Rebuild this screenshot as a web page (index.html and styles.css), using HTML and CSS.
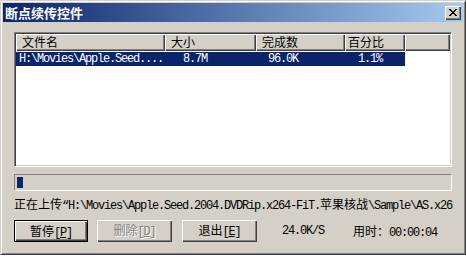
FILE: index.html
```html
<!DOCTYPE html>
<html lang="zh-CN">

<head>
    <meta charset="UTF-8">
    <meta name="viewport" content="width=device-width, initial-scale=1.0">
    <title>断点续传控件</title>
    <link rel="stylesheet" href="styles.css">
</head>

<body>
    <div class="window">
        <div class="titlebar">
            <span class="title">断点续传控件</span>
            <button class="close-btn">
                <svg width="8" height="7" viewBox="0 0 8 7">
                    <path d="M0 0h2v1h1v1h2v-1h1v-1h2v1h-1v1h-1v1h-1v1h1v1h1v1h1v1h-2v-1h-1v-1h-2v1h-1v1h-2v-1h1v-1h1v-1h1v-1h-1v-1h-1v-1h-1z" fill="#000" />
                </svg>
            </button>
        </div>
        <div class="client">
            <div class="list">
                <div class="list-header">
                    <div class="col col-name">文件名</div>
                    <div class="col col-size">大小</div>
                    <div class="col col-done">完成数</div>
                    <div class="col col-pct">百分比</div>
                    <div class="col col-rest"></div>
                </div>
                <div class="list-row selected">
                    <div class="cell col-name mono">H:\Movies\Apple.Seed....</div>
                    <div class="cell col-size mono">&nbsp;8.7M</div>
                    <div class="cell col-done mono">96.0K</div>
                    <div class="cell col-pct mono">1.1%</div>
                </div>
            </div>
            <div class="progress">
                <div class="chunk"></div>
            </div>
            <p class="status"><span>正在上传</span><span class="mono">“H:\Movies\Apple.Seed.2004.DVDRip.x264-FiT.</span><span>苹果核战</span><span class="mono">\Sample\AS.x26</span></p>
            <div class="footer">
                <button class="btn default">暂停<span class="mono">[<u>P</u>]</span></button>
                <button class="btn disabled">删除<span class="mono">[<u>D</u>]</span></button>
                <button class="btn">退出<span class="mono">[<u>E</u>]</span></button>
                <span class="speed mono">24.0K/S</span>
                <span class="elapsed">用时：<span class="mono">00:00:04</span></span>
            </div>
        </div>
    </div>
</body>

</html>
```

FILE: styles.css
```css
* {
    margin: 0;
    padding: 0;
    box-sizing: border-box;
}

body {
    background-color: #ffffff;
    width: 466px;
    height: 257px;
    overflow: hidden;
    font-family: "Noto Sans CJK SC", "DejaVu Sans", sans-serif;
    font-size: 12px;
    color: #000000;
}

.mono {
    font-family: "Liberation Mono", "DejaVu Sans Mono", monospace;
    font-size: 12px;
    letter-spacing: -1.2px;
}

/* classic window frame */
.window {
    width: 466px;
    height: 255px;
    background-color: #d4d0c8;
    border: 1px solid;
    border-color: #d4d0c8 #404040 #404040 #d4d0c8;
    box-shadow: inset 1px 1px #ffffff, inset -1px -1px #808080;
    padding: 2px;
}

.titlebar {
    height: 19px;
    display: flex;
    align-items: center;
    justify-content: space-between;
    padding: 0 2px 0 2px;
    background: linear-gradient(to right, #0a246a, #a6caf0);
}

.title {
    color: #ffffff;
    font-weight: bold;
    font-size: 13px;
    line-height: 19px;
}

.close-btn {
    width: 16px;
    height: 14px;
    background-color: #d4d0c8;
    border: none;
    box-shadow: inset 1px 1px #ffffff, inset -1px -1px #404040, inset -2px -2px #808080;
    display: flex;
    align-items: center;
    justify-content: center;
    padding: 0 1px 1px 0;
}

.close-btn svg {
    display: block;
}

.client {
    padding: 10px 11px 0 11px;
}

/* list view */
.list {
    height: 135px;
    background-color: #ffffff;
    border: 1px solid;
    border-color: #808080 #ffffff #ffffff #808080;
    box-shadow: inset 1px 1px #404040, inset -1px -1px #d4d0c8;
    padding: 1px;
    overflow: hidden;
}

.list-header {
    display: flex;
    height: 17px;
}

.col {
    height: 17px;
    line-height: 16px;
    background-color: #d4d0c8;
    box-shadow: inset 1px 1px #ffffff, inset -1px -1px #404040, inset -2px -2px #808080;
    padding-left: 6px;
    white-space: nowrap;
}

.col-name {
    width: 149px;
}

.col-size {
    width: 91px;
}

.col-done {
    width: 89px;
}

.col-pct {
    width: 60px;
    padding-left: 3px;
}

.col-rest {
    flex: 1;
}

.list-row {
    display: flex;
    height: 14px;
    margin-top: 1px;
}

.list-row.selected {
    width: 389px;
    background-color: #0a246a;
    color: #ffffff;
}

.cell {
    line-height: 14px;
    white-space: nowrap;
    overflow: hidden;
}

.cell.col-name {
    padding-left: 3px;
}

.cell.col-size,
.cell.col-done {
    padding-left: 12px;
}

.cell.col-pct {
    padding-left: 13px;
}

/* progress */
.progress {
    height: 17px;
    margin-top: 7px;
    border: 1px solid;
    border-color: #808080 #ffffff #ffffff #808080;
    padding: 2px 1px;
}

.chunk {
    width: 6px;
    height: 100%;
    margin-left: 1px;
    background-color: #0a246a;
}

.status {
    margin-top: 6px;
    height: 14px;
    line-height: 14px;
    white-space: nowrap;
}

/* bottom bar */
.footer {
    display: flex;
    align-items: center;
    margin-top: 9px;
}

.btn {
    width: 75px;
    height: 22px;
    margin-right: 9px;
    font-family: "Noto Sans CJK SC", sans-serif;
    font-size: 12px;
    color: #000000;
    background-color: #d4d0c8;
    border: none;
    box-shadow: inset 1px 1px #ffffff, inset -1px -1px #404040, inset -2px -2px #808080;
    line-height: 20px;
}

.btn.default {
    width: 74px;
    border: 1px solid #000000;
}

.btn.disabled {
    color: #808080;
    text-shadow: 1px 1px #ffffff;
    margin-right: 10px;
}

.speed {
    margin-left: 16px;
}

.elapsed {
    margin-left: 29px;
}
```
